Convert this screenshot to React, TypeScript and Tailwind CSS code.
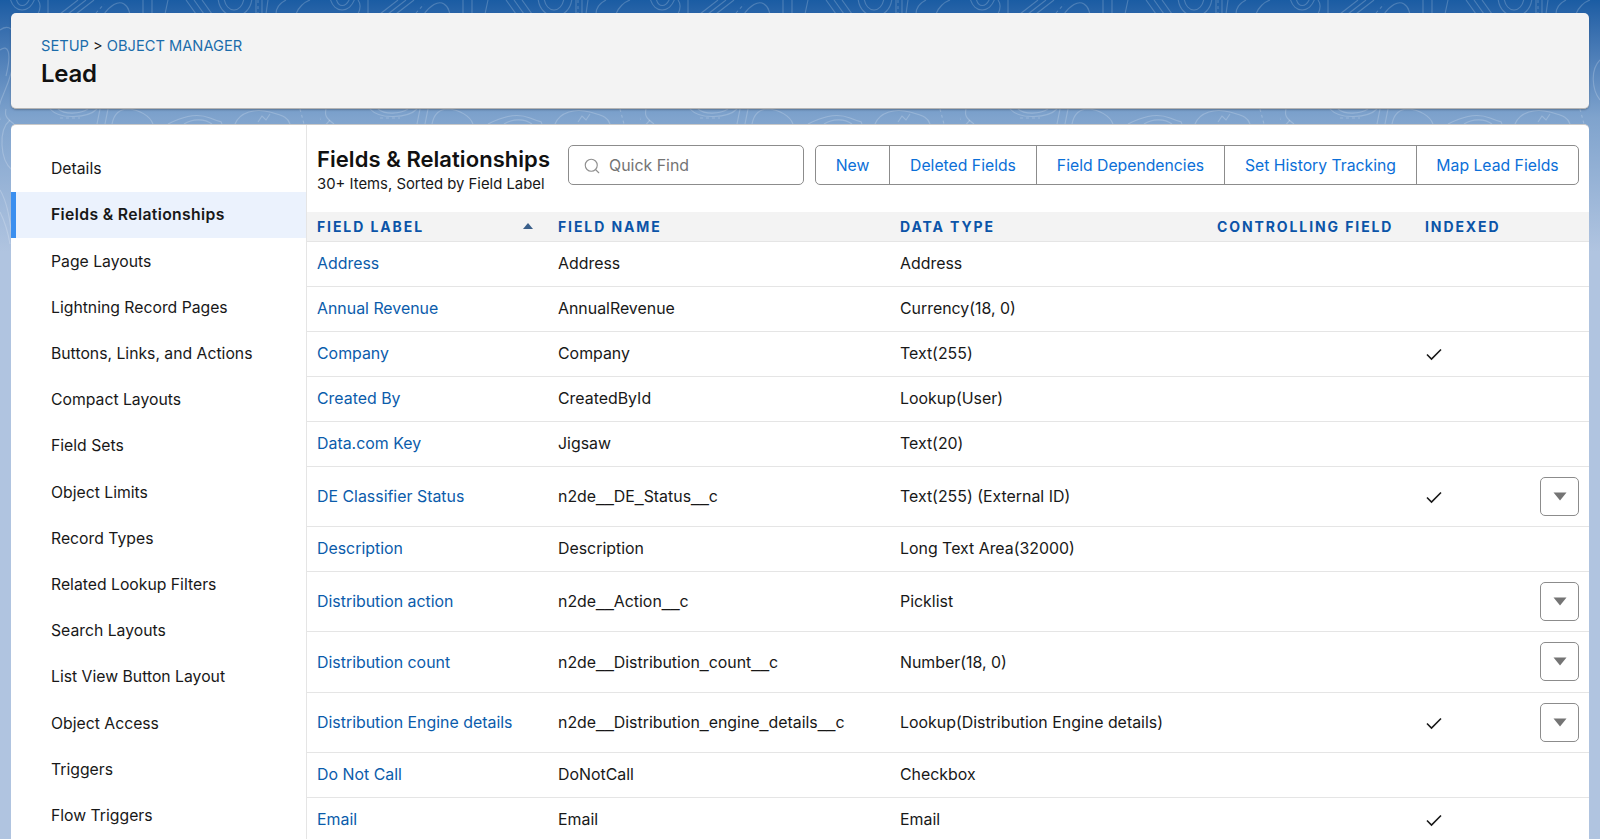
import React from 'react';
import { Search } from 'lucide-react';

const NAV_ITEMS = [
  'Details',
  'Fields & Relationships',
  'Page Layouts',
  'Lightning Record Pages',
  'Buttons, Links, and Actions',
  'Compact Layouts',
  'Field Sets',
  'Object Limits',
  'Record Types',
  'Related Lookup Filters',
  'Search Layouts',
  'List View Button Layout',
  'Object Access',
  'Triggers',
  'Flow Triggers',
];

const ACTIONS = [
  { label: 'New', width: 'w-[73px]' },
  { label: 'Deleted Fields', width: 'w-[147px]' },
  { label: 'Field Dependencies', width: 'w-[188px]' },
  { label: 'Set History Tracking', width: 'w-[192px]' },
  { label: 'Map Lead Fields', width: 'w-[162px]' },
];

interface FieldRow {
  label: string;
  name: string;
  type: string;
  indexed?: boolean;
  menu?: boolean;
  height?: string;
}

const ROWS: FieldRow[] = [
  { label: 'Address', name: 'Address', type: 'Address' },
  { label: 'Annual Revenue', name: 'AnnualRevenue', type: 'Currency(18, 0)' },
  { label: 'Company', name: 'Company', type: 'Text(255)', indexed: true },
  { label: 'Created By', name: 'CreatedById', type: 'Lookup(User)' },
  { label: 'Data.com Key', name: 'Jigsaw', type: 'Text(20)' },
  { label: 'DE Classifier Status', name: 'n2de__DE_Status__c', type: 'Text(255) (External ID)', indexed: true, menu: true, height: 'h-[60px]' },
  { label: 'Description', name: 'Description', type: 'Long Text Area(32000)' },
  { label: 'Distribution action', name: 'n2de__Action__c', type: 'Picklist', menu: true, height: 'h-[60px]' },
  { label: 'Distribution count', name: 'n2de__Distribution_count__c', type: 'Number(18, 0)', menu: true, height: 'h-[61px]' },
  { label: 'Distribution Engine details', name: 'n2de__Distribution_engine_details__c', type: 'Lookup(Distribution Engine details)', indexed: true, menu: true, height: 'h-[60px]' },
  { label: 'Do Not Call', name: 'DoNotCall', type: 'Checkbox' },
  { label: 'Email', name: 'Email', type: 'Email', indexed: true },
];

// one tile of the background contour lines, repeats every 320px
const CONTOURS = [
  'M10 -2C14 14 30 14 35 -2',
  'M16 -2C18 8 26 8 30 -2',
  'M38 14C41 8 41 4 38 0',
  'M48 0V14',
  'M60 14L78 0M68 14L86 0M76 14L94 0',
  'M104 14C110 6 118 0 124 4S128 10 130 14',
  'M143 0V14M152 0V14M165 14L168 0',
  'M186 0L196 14M194 0L204 14M202 0L212 14',
  'M218 -2C220 22 250 22 252 -2',
  'M224 -2C226 14 242 14 244 -2',
  'M256 0V14M262 0V14M268 0L266 14',
  'M276 14C276 6 282 2 286 0',
  'M296 14C298 8 304 2 310 0',
  'M50 109C60 120 88 118 97 109',
  'M58 109C65 115 80 114 88 109',
  'M97 124L100 109M105 124L108 109',
  'M112 124C114 114 120 109 128 109C140 110 150 116 153 124',
  'M168 124C180 118 195 112 210 118S220 120 222 124',
  'M184 124C192 119 204 118 212 124',
  'M235 124C240 112 255 108 270 112S288 118 290 124',
  'M258 122L262 116L266 120L270 114',
  'M6 109C4 116 8 120 14 124',
  'M0 30C14 20 20 40 12 70S-4 100 0 120',
  'M0 50C8 44 12 52 6 76',
  'M10 120C-2 130 0 160 12 170',
  'M0 190C6 200 10 215 12 240',
  'M0 212C4 220 8 232 10 244',
  'M320 60C310 70 312 90 320 100',
];

const DASHES = ['M96 13L104 4', 'M60 118H80', 'M300 109L304 124', 'M258 0V14'];

function CheckMark() {
  return (
    <svg width="18" height="18" viewBox="0 0 18 18" fill="none" className="mt-[1px]">
      <path d="M2 9.5L6.5 14L16 4.5" stroke="#181818" strokeWidth="1.6" />
    </svg>
  );
}

function RowMenu() {
  return (
    <div className="ml-auto flex h-[39px] w-[39px] items-center justify-center rounded-[5px] border border-[#8c8c8c] bg-white">
      <svg width="14" height="9" viewBox="0 0 14 9">
        <path d="M0.5 0.5H13.5L7 8.5Z" fill="#747474" />
      </svg>
    </div>
  );
}

// underscores are wider in the reference font
function FieldName({ name }: { name: string }) {
  return (
    <>
      {name.split(/(_)/).map((part, i) =>
        part === '_' ? (
          <span key={i} className="font-['Liberation_Sans',sans-serif]">_</span>
        ) : (
          part
        ),
      )}
    </>
  );
}

export default function App() {
  return (
    <div className="relative h-[839px] overflow-hidden bg-gradient-to-b from-[#1a5ca3] via-[#7fa3cd] via-[14%] to-[#b0c4e0] to-[30%] pl-[11px] pr-[11px] pt-[13px] font-['Inter',sans-serif] text-[15.9px] text-[#181818]">
      <svg className="absolute left-0 top-0" width="1600" height="300" fill="none">
        <defs>
          <pattern id="contours" x="0" y="0" width="320" height="300" patternUnits="userSpaceOnUse">
            {CONTOURS.map((d) => (
              <path key={d} d={d} stroke="#ffffff" strokeOpacity="0.2" strokeWidth="1.1" fill="none" />
            ))}
            {DASHES.map((d) => (
              <path key={d} d={d} stroke="#ffffff" strokeOpacity="0.2" strokeWidth="1.1" strokeDasharray="3 3" fill="none" />
            ))}
          </pattern>
        </defs>
        <rect width="1600" height="300" fill="url(#contours)" />
      </svg>

      <div className="relative h-[96px] rounded-[5px] border-b border-[#b5b5b5] bg-[#f3f3f3] pl-[30px] pt-[23px] shadow-[0_1px_2px_rgba(0,0,0,0.25)]">
        <div className="text-[14.65px] leading-[20px] text-[#181818]">
          <span className="text-[#1b6cab]">SETUP</span> &gt; <span className="text-[#1b6cab]">OBJECT MANAGER</span>
        </div>
        <div className="mt-[2px] text-[24px] font-semibold leading-[32px] tracking-[-0.3px] text-[#111111]">Lead</div>
      </div>

      <div className="relative mt-[15px] flex h-[760px] rounded-t-[5px] border-t border-[#c9c9c9] bg-white">
        <nav className="w-[296px] shrink-0 border-r border-[#e5e5e5] pt-[21px] text-[15.75px]">
          {NAV_ITEMS.map((item) => {
            const active = item === 'Fields & Relationships';
            return (
              <div
                key={item}
                className={
                  active
                    ? 'flex h-[46.2px] items-center border-l-[5px] border-[#3b8fef] bg-[#ebf2fd] pl-[35px] font-semibold tracking-[0.35px]'
                    : 'flex h-[46.2px] items-center pl-[40px]'
                }
              >
                {item}
              </div>
            );
          })}
        </nav>

        <main className="min-w-0 flex-1">
          <div className="flex h-[87px] items-start pl-[10px] pr-[10px] pt-[20px]">
            <div className="w-[251px] shrink-0">
              <div className="text-[22px] font-semibold leading-[28px] tracking-[0.05px] text-[#111111]">Fields &amp; Relationships</div>
              <div className="mt-[1px] text-[14.85px] leading-[20px]">30+ Items, Sorted by Field Label</div>
            </div>
            <div className="flex h-[40px] w-[236px] shrink-0 items-center gap-[8px] rounded-[5px] border border-[#8c8c8c] pl-[14px] pt-[2px] text-[#747474]">
              <Search size={18} strokeWidth={1.5} className="text-[#8f8f8f]" />
              <span>Quick Find</span>
            </div>
            <div className="ml-auto flex h-[40px] overflow-hidden rounded-[5px] border border-[#8c8c8c] text-[15.75px]">
              {ACTIONS.map((action, i) => (
                <div
                  key={action.label}
                  className={`flex items-center justify-center pt-[2px] text-[#0b6fd8] ${action.width} ${i > 0 ? 'border-l border-[#8c8c8c]' : ''}`}
                >
                  {action.label}
                </div>
              ))}
            </div>
          </div>

          <table className="w-full table-fixed border-collapse">
            <colgroup>
              <col className="w-[251px]" />
              <col className="w-[342px]" />
              <col className="w-[317px]" />
              <col className="w-[208px]" />
              <col />
            </colgroup>
            <thead>
              <tr className="h-[29px] border-b border-[#e5e5e5] bg-[#f3f3f3] text-left text-[14px] font-bold tracking-[1.9px] text-[#0b54a8]">
                <th className="relative pl-[10px] font-bold">
                  FIELD LABEL
                  <svg width="10" height="6" viewBox="0 0 10 6" className="absolute right-[25px] top-[11px]">
                    <path d="M0 6L5 0L10 6Z" fill="#3a5f8a" />
                  </svg>
                </th>
                <th className="font-bold">FIELD NAME</th>
                <th className="font-bold">DATA TYPE</th>
                <th className="font-bold">CONTROLLING FIELD</th>
                <th className="font-bold">INDEXED</th>
              </tr>
            </thead>
            <tbody>
              {ROWS.map((row) => (
                <tr key={row.label} className={`border-b border-[#e5e5e5] ${row.height ?? 'h-[45px]'}`}>
                  <td className={`pl-[10px] text-[#0b5cab] ${row.menu ? 'pt-[2px]' : ''}`}>{row.label}</td>
                  <td className={row.menu ? 'pt-[2px]' : ''}>
                    <FieldName name={row.name} />
                  </td>
                  <td className={row.menu ? 'pt-[2px]' : ''}>{row.type}</td>
                  <td />
                  <td className="pr-[10px]">
                    <div className="flex items-center">
                      {row.indexed && <CheckMark />}
                      {row.menu && <RowMenu />}
                    </div>
                  </td>
                </tr>
              ))}
            </tbody>
          </table>
        </main>
      </div>
    </div>
  );
}
